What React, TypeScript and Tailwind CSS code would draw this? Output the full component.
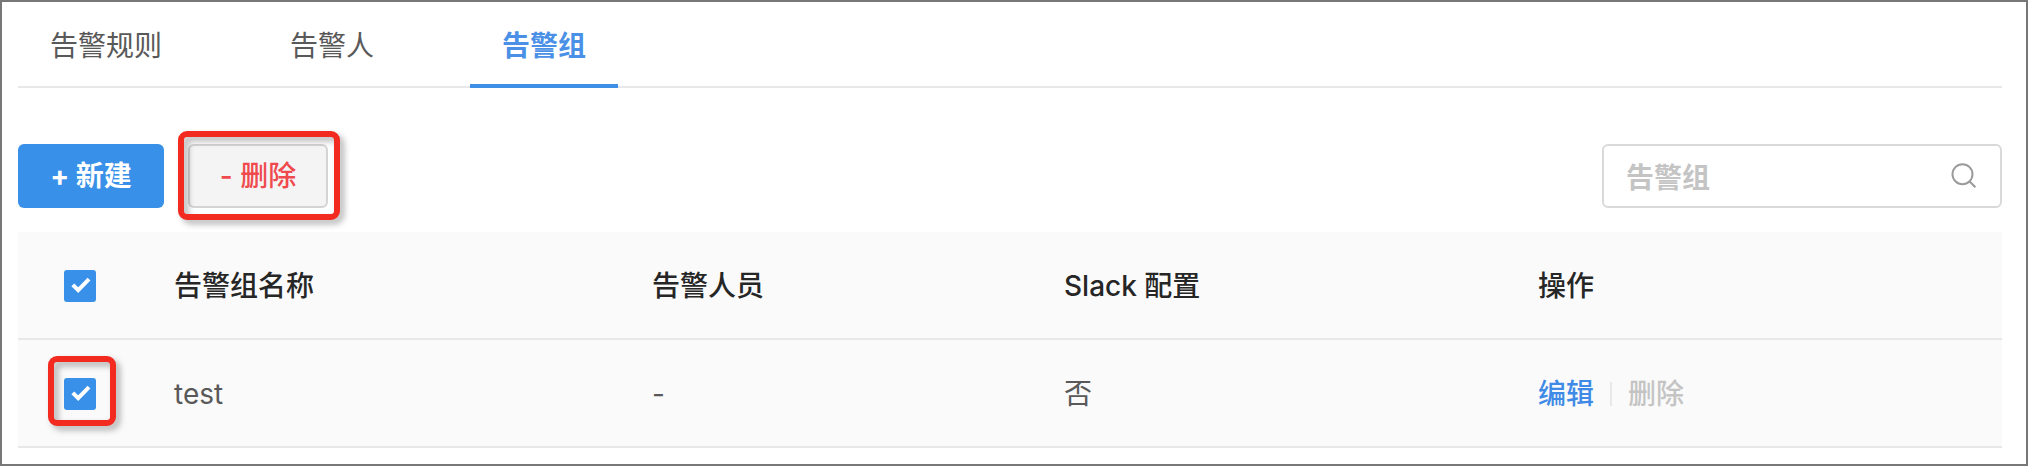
import type { ReactNode } from "react";

const tabs = [
  { label: "告警规则", active: false },
  { label: "告警人", active: false },
  { label: "告警组", active: true },
];

const columns = "grid grid-cols-[156px_478px_412px_474px_1fr]";

function Highlight({ className }: { className: string }) {
  return (
    <span
      className={`pointer-events-none absolute border-6 border-[#f22a1f] drop-shadow-[4px_4px_3px_rgba(0,0,0,0.3)] ${className}`}
    />
  );
}

function Checkbox() {
  return (
    <span className="relative flex size-8 items-center justify-center rounded-[3px] bg-[#3990e8]">
      <svg viewBox="0 0 32 32" className="size-8" fill="none" stroke="#fff" strokeWidth="4">
        <path d="M8.8 14.8l5.4 5.4L25 9.2" />
      </svg>
    </span>
  );
}

function Row({ cells, className }: { cells: ReactNode[]; className: string }) {
  return (
    <div className={`${columns} h-[108px] items-center border-b-2 border-[#e8e8e8] bg-[#fafafa] pt-0.5 ${className}`}>
      {cells.map((cell, i) => (
        <div key={i} className={i === 0 ? "relative pl-[46px]" : ""}>
          {cell}
        </div>
      ))}
    </div>
  );
}

export default function App() {
  return (
    <div className="h-[466px] w-[2028px] overflow-hidden border-2 border-[#777] bg-white pr-6 pl-4 font-['Inter','Noto_Sans_CJK_SC',sans-serif] text-[28px] leading-10 text-[#595959]">
      <nav className="flex h-[86px] gap-16 border-b-2 border-[#e8e8e8]">
        {tabs.map((tab) => (
          <div
            key={tab.label}
            className={
              tab.active
                ? "h-[86px] border-b-4 border-[#3e90e6] px-8 pt-6 font-bold text-[#4a90e6]"
                : "h-[86px] px-8 pt-6"
            }
          >
            {tab.label}
          </div>
        ))}
      </nav>

      <div className="mt-14 flex h-16 items-center">
        <button className="h-16 w-[146px] rounded-[6px] bg-[#3990e8] font-bold whitespace-nowrap text-white">
          + 新建
        </button>
        <div className="relative ml-6">
          <button className="h-16 w-[140px] rounded-[6px] border-2 border-[#d4d4d4] bg-[#f4f4f4] font-medium whitespace-nowrap text-[#f04a4e]">
            - 删除
          </button>
          <Highlight className="-top-[13px] -left-[10px] h-[89px] w-[162px] rounded-[9px]" />
        </div>
        <div className="ml-auto flex h-16 w-[400px] items-center justify-between rounded-[6px] border-2 border-[#d9d9d9] pr-[23px] pl-[22px] text-[#c4c4c4]">
          <span className="pt-[3px] font-bold">告警组</span>
          <svg viewBox="0 0 26 26" className="size-[26px]" fill="none" stroke="#9b9b9b" strokeWidth="2">
            <circle cx="11.5" cy="11.2" r="10" />
            <path d="M18.4 18.2l6 6" />
          </svg>
        </div>
      </div>

      <div className="mt-6">
        <Row
          className="font-medium text-[#262626]"
          cells={[<Checkbox />, "告警组名称", "告警人员", "Slack 配置", "操作"]}
        />
        <Row
          className=""
          cells={[
            <>
              <Checkbox />
              <Highlight className="-top-[22px] left-[30px] h-[70px] w-[68px] rounded-[9px]" />
            </>,
            "test",
            "-",
            "否",
            <div className="flex items-center">
              <span className="font-medium text-[#3e8ae6]">编辑</span>
              <span className="mr-4 ml-4 h-6 w-0.5 bg-[#e8e8e8]" />
              <span className="font-medium text-[#c4c4c4]">删除</span>
            </div>,
          ]}
        />
      </div>
    </div>
  );
}
